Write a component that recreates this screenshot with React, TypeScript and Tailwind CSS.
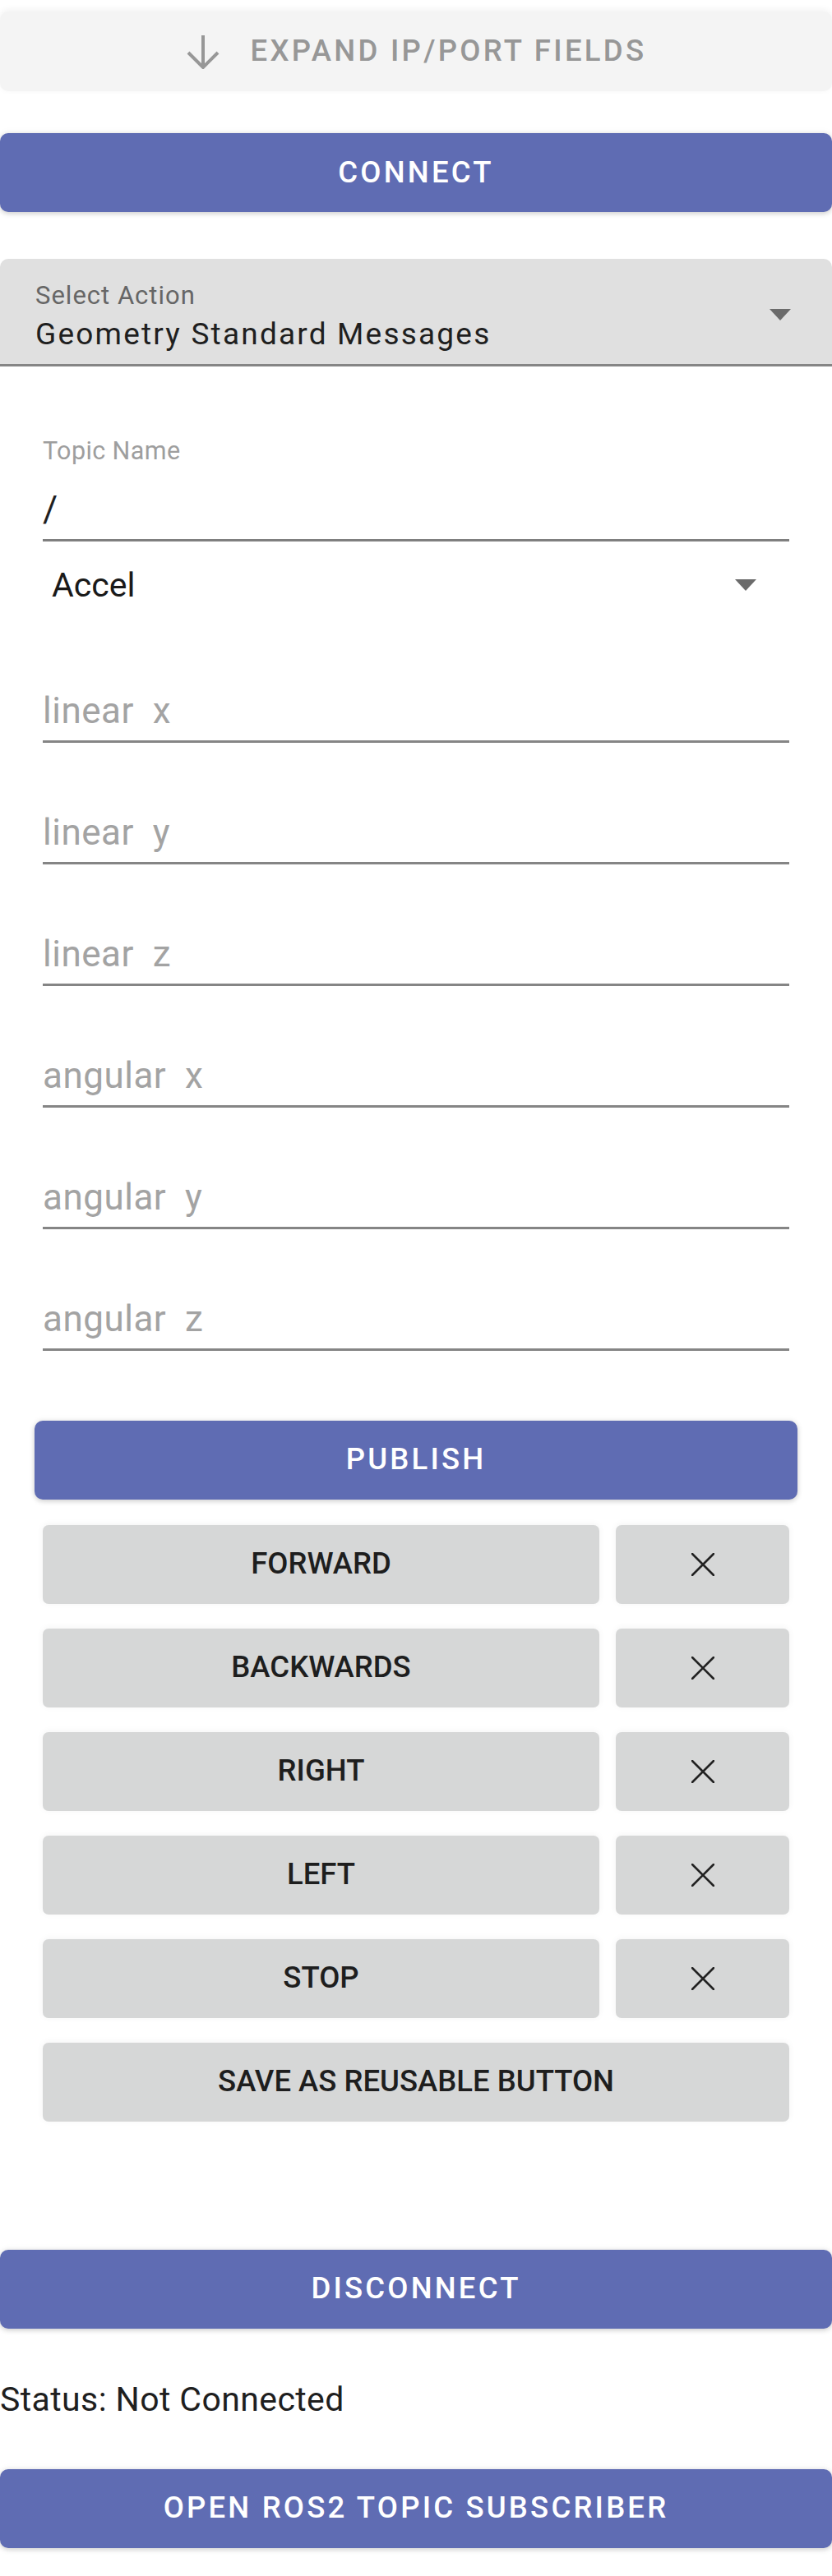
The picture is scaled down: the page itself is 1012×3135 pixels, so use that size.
import React from 'react';

const fields = ['linear  x', 'linear  y', 'linear  z', 'angular  x', 'angular  y', 'angular  z'];
const presets = ['FORWARD', 'BACKWARDS', 'RIGHT', 'LEFT', 'STOP'];

const Caret = ({ className = '' }: { className?: string }) => (
  <svg viewBox="0 0 26 14" className={`w-[26px] h-[14px] ${className}`}>
    <polygon points="0,0 26,0 13,14" fill="#6b6b6b" />
  </svg>
);

const CloseGlyph = () => (
  <svg viewBox="0 0 28 28" className="w-[28px] h-[28px]">
    <line x1="1" y1="1" x2="27" y2="27" stroke="#222" strokeWidth="2.6" strokeLinecap="round" />
    <line x1="27" y1="1" x2="1" y2="27" stroke="#222" strokeWidth="2.6" strokeLinecap="round" />
  </svg>
);

const PrimaryButton = ({ label, className = '' }: { label: string; className?: string }) => (
  <button
    className={`flex items-center justify-center h-[96px] rounded-[10px] bg-[#5f6cb3] text-white text-[36.5px] font-medium tracking-[3.2px] shadow-[0_2px_6px_rgba(0,0,0,0.18),0_-1px_8px_rgba(0,0,0,0.05)] ${className}`}
  >
    {label}
  </button>
);

const GreyButton = ({ children, className = '' }: { children: React.ReactNode; className?: string }) => (
  <button
    className={`flex items-center justify-center h-[96px] rounded-[7px] bg-[#d6d7d7] text-[#1e1e1e] text-[36.5px] font-medium shadow-[0_-1px_8px_rgba(0,0,0,0.05)] ${className}`}
  >
    {children}
  </button>
);

export default function App() {
  return (
    <div className="w-[1012px] min-h-[3135px] bg-white font-['Roboto',sans-serif] pt-[14px] flex flex-col">
      {/* expand ip/port */}
      <button className="h-[97px] rounded-[10px] bg-[#f4f4f4] shadow-[0_-2px_8px_rgba(0,0,0,0.06)] flex items-center justify-center gap-[37px]">
        <svg viewBox="0 0 42 42" className="w-[42px] h-[42px]">
          <path d="M21 1 V39 M3 22 L21 40 L39 22" fill="none" stroke="#979797" strokeWidth="4" />
        </svg>
        <span className="text-[36.5px] font-medium tracking-[3.3px] text-[#979797]">EXPAND IP/PORT FIELDS</span>
      </button>

      <PrimaryButton label="CONNECT" className="mt-[51px]" />

      {/* select action */}
      <div className="relative mt-[57px] h-[131px] bg-[#e0e0e0] rounded-t-[10px] border-b-[3px] border-[#858585] px-[43px] pt-[29px]">
        <div className="text-[31px] leading-none tracking-[1px] text-[#666666]">Select Action</div>
        <div className="mt-[13px] text-[37px] leading-none tracking-[2.2px] text-[#1f1f1f]">Geometry Standard Messages</div>
        <Caret className="absolute right-[50px] top-[61px]" />
      </div>

      <div className="px-[52px] flex flex-col">
        <div className="mt-[88px] text-[30.5px] leading-none tracking-[0.4px] text-[#9e9e9e]">Topic Name</div>
        <div className="mt-[33px] h-[61px] border-b-[3px] border-[#7f7f7f] text-[44px] leading-none text-[#1f1f1f]">/</div>

        <div className="mt-[33px] flex items-center justify-between pl-[11px] pr-[40px]">
          <span className="text-[41px] leading-none text-[#1a1a1a]">Accel</span>
          <Caret />
        </div>

        <div className="mt-[110px] flex flex-col gap-[87px]">
          {fields.map((f) => (
            <div
              key={f}
              className="h-[61px] border-b-[3px] border-[#858585] text-[44px] leading-none tracking-[0.5px] text-[#a3a3a3] whitespace-pre"
            >
              {f}
            </div>
          ))}
        </div>

        <PrimaryButton label="PUBLISH" className="mt-[85px] -mx-[10px] h-[95px]" />

        <div className="mt-[31px] flex flex-col gap-[30px]">
          {presets.map((p) => (
            <div key={p} className="flex gap-[20px]">
              <GreyButton className="flex-1">{p}</GreyButton>
              <GreyButton className="w-[211px]">
                <CloseGlyph />
              </GreyButton>
            </div>
          ))}
          <GreyButton>SAVE AS REUSABLE BUTTON</GreyButton>
        </div>
      </div>

      <PrimaryButton label="DISCONNECT" className="mt-[156px]" />

      <div className="mt-[66px] text-[41px] leading-none tracking-[0.4px] text-[#1f1f1f]">Status: Not Connected</div>

      <PrimaryButton label="OPEN ROS2 TOPIC SUBSCRIBER" className="mt-[64px] h-[95px]" />
    </div>
  );
}
